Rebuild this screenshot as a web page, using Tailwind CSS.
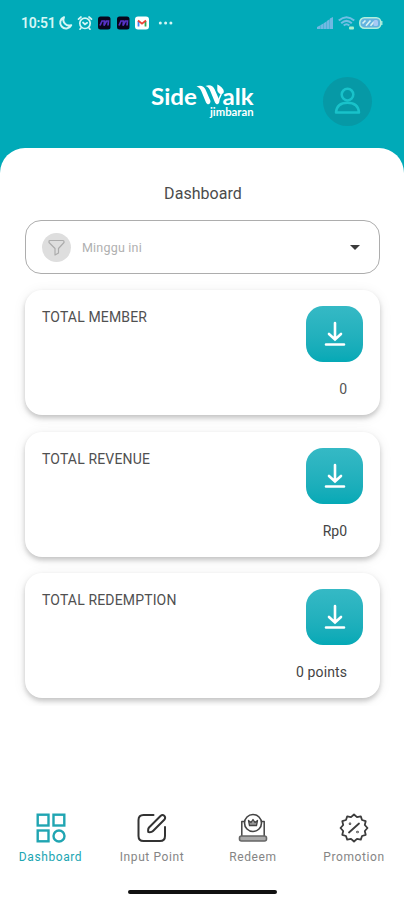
<!DOCTYPE html>
<html lang="id">

<head>
  <meta charset="UTF-8">
  <meta name="viewport" content="width=device-width, initial-scale=1.0">
  <title>Sidewalk Jimbaran - Dashboard</title>
  <script src="https://cdn.jsdelivr.net/npm/@tailwindcss/browser@4"></script>
</head>

<body class="bg-[#00aab8] font-['Roboto',sans-serif] h-[900px] w-[404px] flex flex-col overflow-hidden">

  <!-- Status bar -->
  <div class="h-[46px] shrink-0 flex items-center justify-between pl-[21px] pr-[21px] text-[#d5f6f5]">
    <div class="flex items-center">
      <span class="w-[36px] text-[14px] font-semibold tracking-[-0.25px] leading-none">10:51</span>
      <svg class="w-4 h-4" viewBox="0 0 16 16" fill="none" stroke="currentColor" stroke-width="2" stroke-linejoin="round">
        <path d="M7 2.2A5.8 5.8 0 1 0 14.2 10.2A5.8 5.8 0 0 1 7 2.2Z" />
      </svg>
      <svg class="w-4 h-4 ml-1" viewBox="0 0 16 16" fill="none" stroke="currentColor" stroke-width="1.7" stroke-linecap="round">
        <circle cx="8" cy="8.3" r="5.2" />
        <path d="M1.5 4.2L4 2M14.5 4.2L12 2M4 13l-1 1.2M12 13l1 1.2M6 7.5l2 1.8 2.2-1.5" />
      </svg>
      <svg class="w-[13px] h-[14px] ml-[5px]" viewBox="0 0 13 14">
        <rect y="0.5" width="12.5" height="13" rx="2.5" fill="#08051b" />
        <path d="M2 9.5L4 5H6.500L6 9.5 8.5 5H10.5L10 9.5" fill="none" stroke="#5632c4" stroke-width="1.7" />
      </svg>
      <svg class="w-[13px] h-[14px] ml-[6px]" viewBox="0 0 13 14">
        <rect y="0.5" width="12.5" height="13" rx="2.5" fill="#08051b" />
        <path d="M2 9.5L4 5H6.5L6 9.5 8.5 5H10.5L10 9.5" fill="none" stroke="#5632c4" stroke-width="1.7" />
      </svg>
      <svg class="w-[14px] h-[14px] ml-[5px]" viewBox="0 0 14 14" fill="none" stroke-width="1.8">
        <rect y="0.5" width="14" height="13" rx="3" fill="#fff" />
        <path d="M3.5 10.5V5" stroke="#4285f4" />
        <path d="M10.5 10.5V5" stroke="#34a853" />
        <path d="M3 4.5l4 3.2 4-3.2" stroke="#ea4335" />
      </svg>
      <svg class="w-4 h-4 ml-[9px]" viewBox="0 0 16 16" fill="currentColor">
        <circle cx="2.3" cy="8" r="1.5" />
        <circle cx="7.6" cy="8" r="1.5" />
        <circle cx="12.9" cy="8" r="1.5" />
      </svg>
    </div>
    <div class="flex items-center">
      <svg class="w-4 h-3" viewBox="0 0 16 12" fill="#70b8e2">
        <path d="M0 12V10L3 8.5V12ZM3.3 12V8.2L6.4 6.5V12ZM6.7 12V6.2L9.5 4.5V12ZM9.8 12V4L12.6 2.2V12ZM12.9 12V1.5L16 0V12Z" />
      </svg>
      <svg class="w-[17px] h-[14px] ml-[5px]" viewBox="0 0 17 14" fill="none" stroke="#70bfe4" stroke-width="2">
        <path d="M.8 4.6Q8.5-2.2 16.2 4.6M3.2 7.2Q8.5 2.5 13.8 7.2M5.7 9.5Q8.5 7 11.3 9.5" />
        <rect x="11" y="10.5" width="5" height="3" rx="1" fill="#a9efcf" stroke="none" />
      </svg>
      <svg class="w-6 h-3 ml-1" viewBox="0 0 24 12">
        <rect x=".8" y=".8" width="21" height="10.4" rx="4.5" fill="#63b3df" stroke="#b2eedd" stroke-width="1.5" />
        <path d="M22.8 4v4" stroke="#b2eedd" stroke-width="1.3" />
        <path d="M3.5 6.5l3-3M7 8.8L11.5 3.5M11.5 8.8l3.5-4" stroke="#d9f3f2" stroke-width="1.6" />
        <rect x="14.5" y="3" width="4.5" height="6" rx="1.5" fill="#a7c9f4" />
      </svg>
    </div>
  </div>

  <!-- Header -->
  <header class="h-[102px] shrink-0 flex items-start justify-end pr-[32px] pt-[31px]">
    <svg class="w-[106px] h-[38px] mr-[67px] mt-1" viewBox="0 0 106 38" fill="#fff">
      <g font-family="Lato, sans-serif" font-weight="700">
        <text x="1" y="23.5" font-size="23.5" textLength="46" lengthAdjust="spacingAndGlyphs">Side</text>
        <text x="72.5" y="23.5" font-size="23.5" textLength="31" lengthAdjust="spacingAndGlyphs">alk</text>
        <text x="60" y="34.5" font-size="10.5" textLength="43.5" lengthAdjust="spacingAndGlyphs">jimbaran</text>
      </g>
      <!-- two slanted strokes and a leaf form the W -->
      <path d="M46.5 5.500C50.5 3.800 54 5 55.500 8.500L60.500 20C60.300 23.800 57.500 24.300 56 21.500L51.500 10.500C50.500 7.800 49 6.500 46.500 5.500Z" />
      <path d="M55.500 5C59.500 3.300 63 4.500 64.500 8L69.500 19.500C69.300 23.800 66.500 24.300 65 21.500L60.500 10.500C59.500 7.500 58 6 55.500 5Z" />
      <path d="M67.300 3.500C71.500 5.500 75 9 73.500 12C71.500 14.500 66.800 12 67.300 8Z" />
      <path d="M68 20.500L71.300 13" stroke="#fff" stroke-width="1.5" />
    </svg>
    <div class="w-[49px] h-[49px] rounded-full bg-[#0699a6] flex items-center justify-center">
      <svg class="w-[27px] h-[28px] -mt-1" viewBox="0 0 27 28" fill="none" stroke="#19c2ca" stroke-width="2.5" stroke-linejoin="round">
        <circle cx="13.5" cy="8.6" r="5.8" />
        <path d="M2 26.6C2.5 19.5 7 16.8 13.5 16.8S24.5 19.5 25 26.6Z" />
      </svg>
    </div>
  </header>

  <!-- Content -->
  <main class="flex-1 min-h-0 bg-white rounded-t-[25px] flex flex-col">
    <h1 class="mt-[36px] h-[20px] leading-[20px] text-center text-[16px] tracking-[0.05px] text-[#4b4b4b] pl-[2px]">Dashboard</h1>

    <div class="mt-[16px] mx-[25px] w-[355px] h-[54px] shrink-0 border border-[#adadad] rounded-[16px] flex items-center pl-4 pr-[19px]">
      <div class="w-[29px] h-[29px] rounded-full bg-[#dedede] flex items-center justify-center">
        <svg class="w-[17px] h-[17px]" viewBox="0 0 17 17" fill="none" stroke="#acacac" stroke-width="1.2" stroke-linejoin="round">
          <path d="M1 2.5Q1 1.5 2 1.5H15Q16 1.5 16 2.5V3.5L10.5 9.5V14L7 16V9.5L1 3.5Z" />
        </svg>
      </div>
      <span class="ml-[11px] mt-[2px] text-[12.5px] tracking-[0.2px] text-[#b0b0b0]">Minggu ini</span>
      <svg class="ml-auto w-[10px] h-[5px]" viewBox="0 0 10 5" fill="#3b3b3b">
        <path d="M0 0H10L5 5Z" />
      </svg>
    </div>

    <!-- Cards -->
    <div class="h-[432px] shrink-0 overflow-hidden pt-[16px] px-[25px] flex flex-col gap-[16.5px]">
      <section class="w-[355px] h-[125px] shrink-0 bg-white rounded-[17px] shadow-[0_3px_5px_rgba(0,0,0,0.2),0_2px_14px_rgba(0,0,0,0.07)] px-[17px] pt-4">
        <div class="flex justify-between">
          <h2 class="mt-[3px] text-[14px] leading-[16px] tracking-[0.15px] text-[#505050]">TOTAL MEMBER</h2>
          <button class="w-[57px] h-[56px] rounded-[17px] bg-linear-to-b from-[#35b9c5] to-[#04a9b6] flex items-center justify-center">
            <svg class="w-[22px] h-[26px]" viewBox="0 0 22 26" fill="none" stroke="#fff" stroke-width="2.6" stroke-linecap="round">
              <path d="M11 2V18M5 13l6 5.5 6-5.5M2 23.5H20" />
            </svg>
          </button>
        </div>
        <p class="mt-[19px] mr-[16px] text-right text-[14px] leading-[16px] text-[#555]">0</p>
      </section>

      <section class="w-[355px] h-[125px] shrink-0 bg-white rounded-[17px] shadow-[0_3px_5px_rgba(0,0,0,0.2),0_2px_14px_rgba(0,0,0,0.07)] px-[17px] pt-4">
        <div class="flex justify-between">
          <h2 class="mt-[3px] text-[14px] leading-[16px] tracking-[0.15px] text-[#505050]">TOTAL REVENUE</h2>
          <button class="w-[57px] h-[56px] rounded-[17px] bg-linear-to-b from-[#35b9c5] to-[#04a9b6] flex items-center justify-center">
            <svg class="w-[22px] h-[26px]" viewBox="0 0 22 26" fill="none" stroke="#fff" stroke-width="2.6" stroke-linecap="round">
              <path d="M11 2V18M5 13l6 5.5 6-5.5M2 23.5H20" />
            </svg>
          </button>
        </div>
        <p class="mt-[19px] mr-[16px] text-right text-[14px] leading-[16px] text-[#444]">Rp0</p>
      </section>

      <section class="w-[355px] h-[125px] shrink-0 bg-white rounded-[17px] shadow-[0_3px_5px_rgba(0,0,0,0.2),0_2px_14px_rgba(0,0,0,0.07)] px-[17px] pt-4">
        <div class="flex justify-between">
          <h2 class="mt-[3px] text-[14px] leading-[16px] tracking-[0.15px] text-[#505050]">TOTAL REDEMPTION</h2>
          <button class="w-[57px] h-[56px] rounded-[17px] bg-linear-to-b from-[#35b9c5] to-[#04a9b6] flex items-center justify-center">
            <svg class="w-[22px] h-[26px]" viewBox="0 0 22 26" fill="none" stroke="#fff" stroke-width="2.6" stroke-linecap="round">
              <path d="M11 2V18M5 13l6 5.5 6-5.5M2 23.5H20" />
            </svg>
          </button>
        </div>
        <p class="mt-[19px] mr-[16px] text-right text-[14px] leading-[16px] tracking-[0.1px] text-[#444]">0 points</p>
      </section>
    </div>

    <!-- Bottom navigation -->
    <nav class="mt-auto h-[78px] shrink-0 grid grid-cols-4 text-[12px] tracking-[0.6px] text-[#858585]">
      <a class="flex flex-col items-center text-[#20a5b2]">
        <svg class="w-[30px] h-[30px] mt-[1px]" viewBox="0 0 30 30" fill="none" stroke="currentColor" stroke-width="2.4">
          <rect x="1.7" y="1.7" width="10.8" height="10.8" />
          <rect x="17.5" y="1.7" width="10.8" height="10.8" />
          <rect x="1.7" y="17.5" width="10.8" height="10.8" />
          <circle cx="23" cy="23" r="5.5" />
        </svg>
        <span class="mt-[6px] leading-[16px]">Dashboard</span>
      </a>
      <a class="flex flex-col items-center pl-[1px]">
        <svg class="w-[30px] h-[30px] mt-[1px]" viewBox="0 0 30 30" fill="none" stroke="#333" stroke-width="2" stroke-linecap="round" stroke-linejoin="round">
          <path d="M16.5 2H6.5Q1.5 2 1.5 7V23Q1.5 28 6.5 28H23Q28 28 28 23V14" />
          <path d="M12 14.5L23.5 3Q25.5 1.2 27.2 2.8T27.5 6.5L16 18Q14.5 19.5 11.3 19Q10.7 16 12 14.5Z" />
        </svg>
        <span class="mt-[6px] leading-[16px]">Input Point</span>
      </a>
      <a class="flex flex-col items-center pl-[1px]">
        <svg class="w-[30px] h-[30px] mt-[1px]" viewBox="0 0 30 30" fill="none" stroke="#444" stroke-width="1.6" stroke-linejoin="round">
          <path d="M7.5 8.5H3.8V23M22.5 8.5H26.2V23" stroke-width="1.5" />
          <rect x="1.5" y="23" width="27" height="5" rx="2" fill="#aaa" stroke="#666" />
          <circle cx="15" cy="10" r="8.5" fill="#fff" />
          <path d="M10.5 7.5L13 9.5 15 6.5 17 9.5 19.5 7.5 18.5 12.5H11.5Z" fill="#999" stroke-width="1.3" />
        </svg>
        <span class="mt-[6px] leading-[16px]">Redeem</span>
      </a>
      <a class="flex flex-col items-center pl-[1px]">
        <svg class="w-[30px] h-[30px] mt-[1px]" viewBox="0 0 30 30" fill="none" stroke="#3c3c3c" stroke-width="1.8" stroke-linejoin="round" stroke-linecap="round">
          <path d="M15 1.5L18 4.2 21.8 3.3 23 7 26.7 8.2 25.8 12 28.5 15 25.8 18 26.7 21.8 23 23 21.8 26.7 18 25.8 15 28.5 12 25.8 8.2 26.7 7 23 3.3 21.8 4.2 18 1.5 15 4.2 12 3.3 8.2 7 7 8.2 3.3 12 4.2Z" />
          <path d="M10 19.5L20 10.5" />
          <circle cx="11" cy="10.8" r=".4" />
          <circle cx="18.5" cy="19" r=".4" />
        </svg>
        <span class="mt-[6px] leading-[16px]">Promotion</span>
      </a>
    </nav>
    <div class="mx-auto mb-[6px] w-[149px] h-[4px] shrink-0 rounded-full bg-[#111]"></div>
  </main>

</body>

</html>
